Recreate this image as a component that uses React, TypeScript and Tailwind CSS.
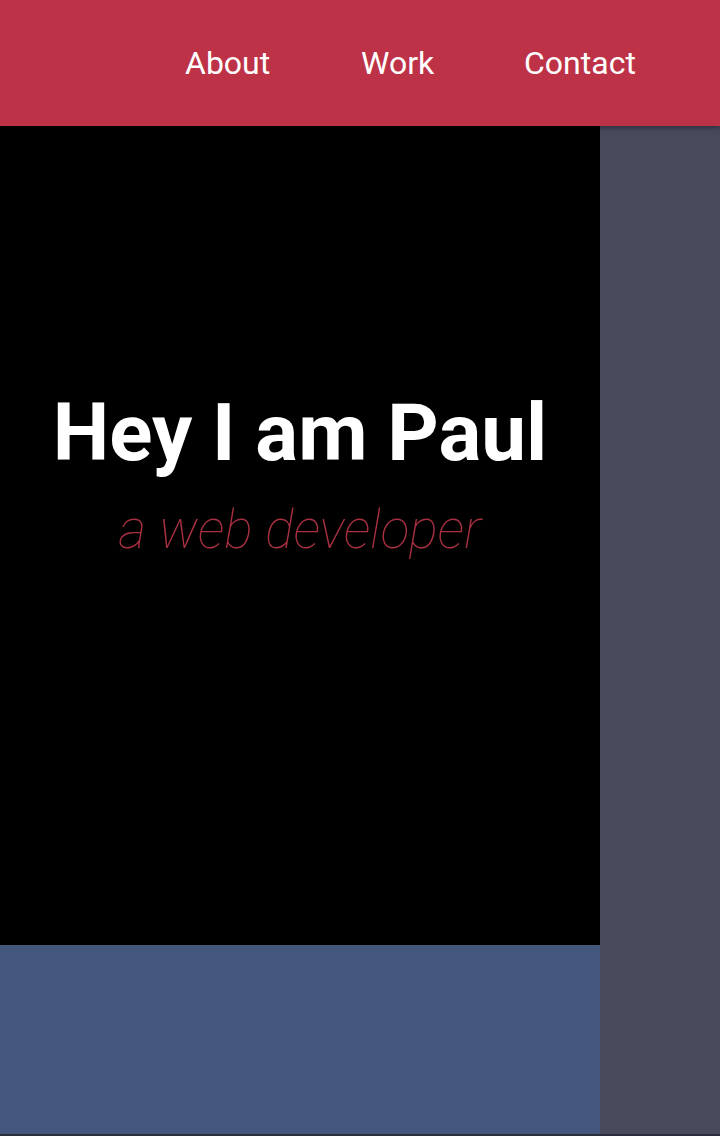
export default function App() {
  return (
    <div className="relative flex h-[1136px] w-[720px] flex-col overflow-hidden bg-[#484a5c] font-['Roboto',sans-serif]">
      <header className="relative z-10 flex h-[126px] shrink-0 items-center bg-[#be3247] shadow-[0_2px_4px_rgba(0,0,0,0.35)]">
        <nav className="flex items-center pl-[185px] text-[32px] text-white">
          <a className="w-[176px]">About</a>
          <a className="w-[163px]">Work</a>
          <a>Contact</a>
        </nav>
      </header>
      <div className="flex flex-1">
        <main className="flex w-[600px] flex-col">
          <section className="flex h-[819px] flex-col items-center bg-black pt-[267px]">
            <h1 className="text-[80px] font-bold leading-none text-white">Hey I am Paul</h1>
            <p className="mt-[30px] text-[53.5px] font-thin italic leading-none text-[#a83040]">
              a web developer
            </p>
          </section>
          <section className="flex-1 bg-[#43577d]" />
        </main>
        <aside className="flex-1" />
      </div>
      <div className="h-[2px] bg-[#2a2d3a]" />
    </div>
  );
}
